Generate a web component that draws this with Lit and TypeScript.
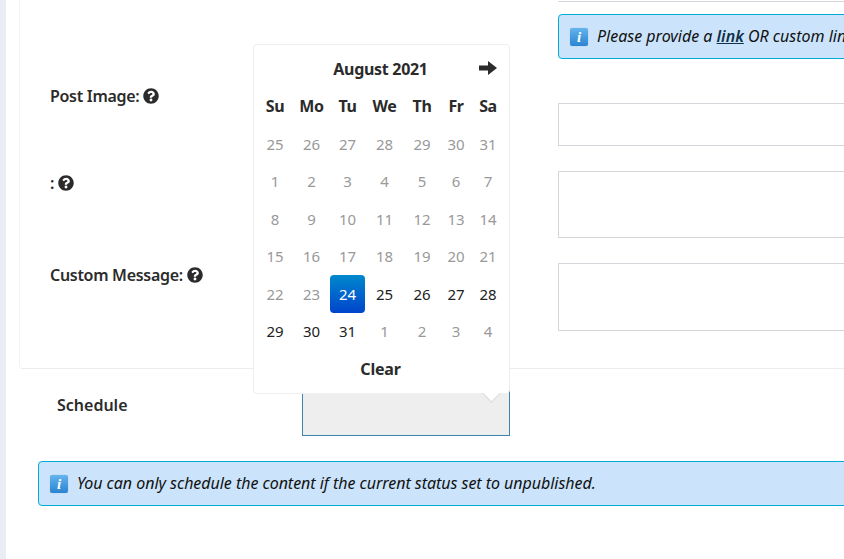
import { LitElement, css, html, svg } from "lit";
import { customElement } from "lit/decorators.js";

const QUESTION =
  "M504 256c0 136.997-111.043 248-248 248S8 392.997 8 256C8 119.083 119.043 8 256 8s248 111.083 248 248zM262.655 90c-54.497 0-89.255 22.957-116.549 63.758-3.536 5.286-2.353 12.415 2.715 16.258l34.699 26.31c5.205 3.947 12.621 3.008 16.665-2.122 17.864-22.658 30.113-35.797 57.303-35.797 20.429 0 45.698 13.148 45.698 32.958 0 14.976-12.363 22.667-32.534 33.976C247.128 238.528 216 254.941 216 296v4c0 6.627 5.373 12 12 12h56c6.627 0 12-5.373 12-12v-1.333c0-28.462 83.186-29.647 83.186-106.667 0-58.002-60.165-102-116.531-102zM256 338c-25.365 0-46 20.635-46 46 0 25.364 20.635 46 46 46s46-20.636 46-46c0-25.365-20.635-46-46-46z";

const helpIcon = html`<svg class="help" viewBox="0 0 512 512">${svg`<path fill="currentColor" d=${QUESTION}></path>`}</svg>`;

const infoIcon = html`<span class="info-icon">i</span>`;

const WEEKDAYS = ["Su", "Mo", "Tu", "We", "Th", "Fr", "Sa"];

// day, and whether it belongs to the current month's enabled range
const DAYS: [number, boolean][] = [
  ...[25, 26, 27, 28, 29, 30, 31].map((d): [number, boolean] => [d, false]),
  ...Array.from({ length: 23 }, (_, i): [number, boolean] => [i + 1, false]),
  ...[24, 25, 26, 27, 28, 29, 30, 31].map((d): [number, boolean] => [d, true]),
  ...[1, 2, 3, 4].map((d): [number, boolean] => [d, false]),
];

@customElement("app-root")
export class AppRoot extends LitElement {
  static styles = css`
    :host {
      display: block;
      width: 844px;
      height: 559px;
      overflow: hidden;
      position: relative;
      background: #fff;
      color: #2b2b2b;
      font-family: "Noto Sans", "Open Sans", sans-serif;
      font-size: 16px;
    }
    .page {
      width: 1300px;
      height: 559px;
      border-left: 6px solid #e9eef4;
      box-sizing: border-box;
    }
    .card {
      margin-left: 13px;
      padding-bottom: 37px;
      border-left: 1px solid #f4f4f4;
      border-bottom: 1px solid #ececec;
      border-bottom-left-radius: 4px;
      display: grid;
      grid-template-columns: 538px 1fr;
      row-gap: 25px;
      align-items: start;
    }
    .label {
      padding-left: 30px;
      font-weight: 600;
      line-height: 24px;
      letter-spacing: -0.3px;
      display: flex;
      align-items: center;
      gap: 4px;
    }
    .help {
      width: 16px;
      height: 16px;
    }
    .top-input {
      height: 1px;
      border-bottom: 1px solid #d5d5dc;
      margin-bottom: 12px;
    }
    .field {
      border: 1px solid #d5d5dc;
      box-sizing: border-box;
    }
    .field.image {
      height: 43px;
      margin-top: 19px;
    }
    .field.blank {
      height: 67px;
    }
    .field.message {
      height: 68px;
    }
    .alert {
      display: flex;
      align-items: center;
      gap: 9px;
      height: 45px;
      box-sizing: border-box;
      padding-left: 11px;
      background: #cbe4fc;
      border: 1px solid #00acd6;
      border-radius: 4px;
      color: #111;
      font-style: italic;
      white-space: nowrap;
    }
    .alert .msg {
      margin-top: -1px;
    }
    .alert a {
      color: #10304a;
      font-weight: 600;
      text-decoration: underline;
    }
    .info-icon {
      width: 18px;
      height: 18px;
      border-radius: 2px;
      background: linear-gradient(#64b4ee, #2a84d0);
      box-shadow: 0 0 1px #9ab;
      color: #fff;
      font-family: "Liberation Serif", serif;
      font-style: italic;
      font-weight: 700;
      font-size: 15px;
      line-height: 18px;
      text-align: center;
      flex: none;
    }
    .schedule {
      display: flex;
      align-items: flex-start;
      padding-top: 8px;
    }
    .schedule-label {
      width: 296px;
      padding: 16px 0 0 51px;
      box-sizing: border-box;
      font-weight: 600;
      line-height: 24px;
    }
    .schedule-input {
      width: 208px;
      height: 59px;
      box-sizing: border-box;
      background: #eee;
      border: 1px solid #3c85b0;
    }
    .schedule-alert {
      margin: 25px 0 0 32px;
      letter-spacing: -0.04px;
    }
    .picker {
      position: absolute;
      left: 253px;
      top: 44px;
      width: 257px;
      height: 350px;
      box-sizing: border-box;
      padding: 5px 5px 5px 3px;
      background: #fff;
      border: 1px solid #eeeeee;
      border-radius: 4px;
    }
    .picker::after {
      content: "";
      position: absolute;
      left: 231px;
      top: 342px;
      width: 12px;
      height: 12px;
      background: #fff;
      border-right: 1px solid #d8d8d8;
      border-bottom: 1px solid #d8d8d8;
      transform: rotate(45deg);
    }
    .month {
      display: grid;
      grid-template-columns: 32px 1fr 32px;
      align-items: center;
      height: 37.5px;
      text-align: center;
      font-weight: 700;
      letter-spacing: -0.3px;
    }
    .month .title {
      grid-column: 2;
    }
    .arrow {
      width: 18px;
      height: 14px;
      justify-self: center;
      margin-top: -2px;
    }
    .days {
      display: grid;
      grid-template-columns: 36px 37px 35px 39px 36px 32px 32px;
      grid-auto-rows: 37.5px;
      text-align: center;
    }
    .days > div {
      display: flex;
      align-items: center;
      justify-content: center;
    }
    .wd {
      font-weight: 700;
      letter-spacing: -0.4px;
    }
    .day {
      color: #999;
      font-size: 15px;
    }
    .day.on {
      color: #222;
    }
    .day.selected {
      color: #fff;
      border-radius: 4px;
      background: linear-gradient(#0088cc, #0044cc);
    }
    .clear {
      text-align: center;
      line-height: 37.5px;
      padding-top: 1px;
      font-weight: 700;
      letter-spacing: -0.2px;
    }
  `;

  render() {
    return html`<div class="page">
      <section class="card">
        <div></div>
        <div>
          <div class="top-input"></div>
          <div class="alert">
            ${infoIcon}
            <span class="msg">Please provide a <a>link</a> OR custom link to use for the post image.</span>
          </div>
        </div>
        <div class="label">Post Image: ${helpIcon}</div>
        <div class="field image"></div>
        <div class="label">: ${helpIcon}</div>
        <div class="field blank"></div>
        <div class="label">Custom Message: ${helpIcon}</div>
        <div class="field message"></div>
      </section>
      <div class="schedule">
        <div class="schedule-label">Schedule</div>
        <div class="schedule-input"></div>
      </div>
      <div class="alert schedule-alert">
        ${infoIcon}
        <span class="msg">You can only schedule the content if the current status set to unpublished.</span>
      </div>
      <div class="picker">
        <div class="month">
          <span class="title">August 2021</span>
          <svg class="arrow" viewBox="0 0 18 14">
            <path fill="currentColor" d="M0 4.500h9V0l9 7-9 7V9.500H0z"></path>
          </svg>
        </div>
        <div class="days">
          ${WEEKDAYS.map((d) => html`<div class="wd">${d}</div>`)}
          ${DAYS.map(([d, on]) => {
            const selected = on && d === 24;
            return html`<div class="day ${on ? "on" : ""} ${selected ? "selected" : ""}">${d}</div>`;
          })}
        </div>
        <div class="clear">Clear</div>
      </div>
    </div>`;
  }
}

declare global {
  interface HTMLElementTagNameMap {
    "app-root": AppRoot;
  }
}
